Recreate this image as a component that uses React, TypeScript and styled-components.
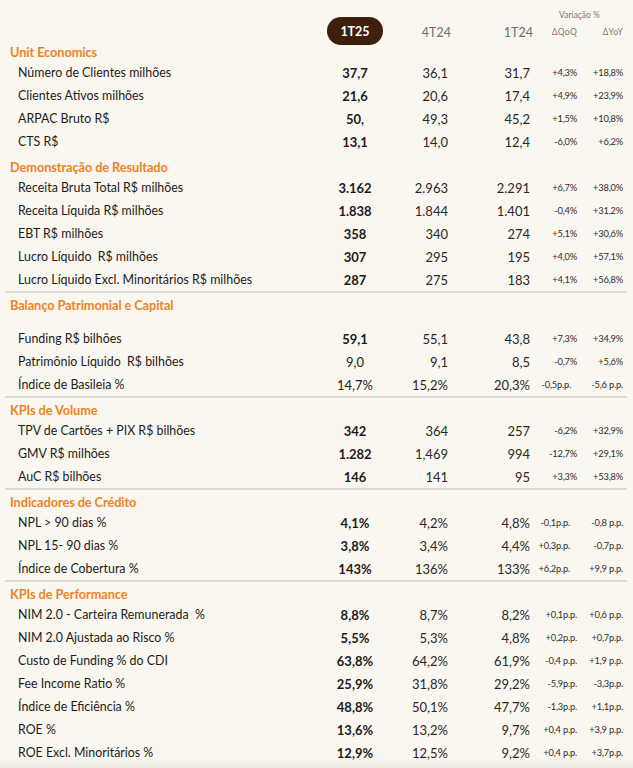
import React from "react";
import styled, { createGlobalStyle } from "styled-components";

const Global = createGlobalStyle`
  html, body { margin: 0; padding: 0; background: #faf7f0; }
  body { font-family: "Lato", "Open Sans", sans-serif; color: #1d1b19; }
`;

const COLS = "322px 56px 65px 82px 47px 46px";

const Page = styled.div`
  width: 633px;
  min-height: 768px;
  box-sizing: border-box;
  padding: 1px 6px 0 5px;
  background: linear-gradient(to bottom, #faf7f0 calc(100% - 10px), #ece9e3 100%);
`;

const Header = styled.div`
  display: grid;
  grid-template-columns: ${COLS};
  grid-template-rows: 14px 20px;
  padding-top: 7px;
  height: 41px;
  box-sizing: border-box;
`;

const Pill = styled.div`
  grid-column: 2;
  grid-row: 1 / span 2;
  align-self: end;
  height: 28px;
  margin-bottom: -3px;
  border-radius: 14px;
  background: #3c1f0d;
  color: #fff;
  font-weight: 700;
  font-size: 12.5px;
  display: flex;
  align-items: center;
  justify-content: center;
`;

const PeriodLabel = styled.div<{ $col: number }>`
  grid-column: ${(p) => p.$col};
  grid-row: 2;
  display: flex;
  align-items: center;
  justify-content: flex-end;
  margin-right: -3px;
  color: #6f6d6a;
  font-size: 12.5px;
`;

const VarTitle = styled.div`
  grid-column: 5 / span 2;
  grid-row: 1;
  display: flex;
  align-items: center;
  justify-content: center;
  padding-left: 6px;
  color: #7a7874;
  font-size: 8.5px;
`;

const DeltaLabel = styled.div<{ $col: number }>`
  grid-column: ${(p) => p.$col};
  grid-row: 2;
  display: flex;
  align-items: center;
  justify-content: flex-end;
  color: #7a7874;
  font-size: 8.5px;
  letter-spacing: 0.3px;
`;

const Section = styled.section<{ $line: boolean }>`
  border-top: 2px solid ${(p) => (p.$line ? "#dedbd4" : "transparent")};
  padding-top: 2px;
  &:first-of-type {
    border-top: none;
    padding-top: 0;
  }
`;

const Title = styled.h2<{ $gap: boolean }>`
  margin: 0 0 ${(p) => (p.$gap ? 13 : 0)}px 0;
  height: 19px;
  display: flex;
  align-items: center;
  padding-left: 5px;
  color: #ec8427;
  font-size: 12.8px;
  font-weight: 700;
  letter-spacing: -0.1px;
`;

const Row = styled.div`
  display: grid;
  grid-template-columns: ${COLS};
  height: 23px;
  align-items: center;
`;

const Label = styled.div`
  padding-left: 13px;
  font-size: 12.4px;
  white-space: pre;
  color: #1d1b19;
`;

const Current = styled.div<{ $bold: boolean }>`
  text-align: center;
  font-size: 13px;
  font-weight: ${(p) => (p.$bold ? 700 : 400)};
  color: #1d1b19;
`;

const Value = styled.div`
  text-align: right;
  font-size: 13px;
  color: #2a2826;
`;

const Delta = styled.div<{ $inset?: number }>`
  text-align: right;
  padding-right: ${(p) => p.$inset ?? 0}px;
  font-size: 9.3px;
  letter-spacing: -0.2px;
  color: #2e2c2a;
  white-space: nowrap;
`;

type R = {
  label: string;
  cur: string;
  bold?: boolean;
  prev: string;
  year: string;
  qoq: string;
  yoy: string;
  inset?: number;
};

type S = { title: string; line: boolean; gap?: boolean; rows: R[] };

const r = (
  label: string,
  cur: string,
  prev: string,
  year: string,
  qoq: string,
  yoy: string,
  opts: Partial<R> = {}
): R => ({ label, cur, prev, year, qoq, yoy, bold: true, ...opts });

const sections: S[] = [
  {
    title: "Unit Economics",
    line: false,
    rows: [
      r("Número de Clientes milhões", "37,7", "36,1", "31,7", "+4,3%", "+18,8%"),
      r("Clientes Ativos milhões", "21,6", "20,6", "17,4", "+4,9%", "+23,9%"),
      r("ARPAC Bruto R$", "50,", "49,3", "45,2", "+1,5%", "+10,8%"),
      r("CTS R$", "13,1", "14,0", "12,4", "-6,0%", "+6,2%"),
    ],
  },
  {
    title: "Demonstração de Resultado",
    line: false,
    rows: [
      r("Receita Bruta Total R$ milhões", "3.162", "2.963", "2.291", "+6,7%", "+38,0%"),
      r("Receita Líquida R$ milhões", "1.838", "1.844", "1.401", "-0,4%", "+31,2%"),
      r("EBT R$ milhões", "358", "340", "274", "+5,1%", "+30,6%"),
      r("Lucro Líquido  R$ milhões", "307", "295", "195", "+4,0%", "+57,1%"),
      r("Lucro Líquido Excl. Minoritários R$ milhões", "287", "275", "183", "+4,1%", "+56,8%"),
    ],
  },
  {
    title: "Balanço Patrimonial e Capital",
    line: true,
    gap: true,
    rows: [
      r("Funding R$ bilhões", "59,1", "55,1", "43,8", "+7,3%", "+34,9%"),
      r("Patrimônio Líquido  R$ bilhões", "9,0", "9,1", "8,5", "-0,7%", "+5,6%", { bold: false }),
      r("Índice de Basileia %", "14,7%", "15,2%", "20,3%", "-0,5p.p.", "-5,6 p.p.", { bold: false, inset: 6 }),
    ],
  },
  {
    title: "KPIs de Volume",
    line: true,
    rows: [
      r("TPV de Cartões + PIX R$ bilhões", "342", "364", "257", "-6,2%", "+32,9%"),
      r("GMV R$ milhões", "1.282", "1,469", "994", "-12,7%", "+29,1%"),
      r("AuC R$ bilhões", "146", "141", "95", "+3,3%", "+53,8%"),
    ],
  },
  {
    title: "Indicadores de Crédito",
    line: true,
    rows: [
      r("NPL > 90 dias %", "4,1%", "4,2%", "4,8%", "-0,1p.p.", "-0,8 p.p.", { inset: 7 }),
      r("NPL 15- 90 dias %", "3,8%", "3,4%", "4,4%", "+0,3p.p.", "-0,7p.p.", { inset: 7 }),
      r("Índice de Cobertura %", "143%", "136%", "133%", "+6,2p.p.", "+9,9 p.p.", { inset: 7 }),
    ],
  },
  {
    title: "KPIs de Performance",
    line: true,
    rows: [
      r("NIM 2.0 - Carteira Remunerada  %", "8,8%", "8,7%", "8,2%", "+0,1p.p.", "+0,6 p.p."),
      r("NIM 2.0 Ajustada ao Risco %", "5,5%", "5,3%", "4,8%", "+0,2p.p.", "+0,7p.p."),
      r("Custo de Funding % do CDI", "63,8%", "64,2%", "61,9%", "-0,4 p.p.", "+1,9 p.p."),
      r("Fee Income Ratio %", "25,9%", "31,8%", "29,2%", "-5,9p.p.", "-3,3p.p."),
      r("Índice de Eficiência %", "48,8%", "50,1%", "47,7%", "-1,3p.p.", "+1,1p.p."),
      r("ROE %", "13,6%", "13,2%", "9,7%", "+0,4 p.p.", "+3,9 p.p."),
      r("ROE Excl. Minoritários %", "12,9%", "12,5%", "9,2%", "+0,4 p.p.", "+3,7p.p."),
    ],
  },
];

export default function App() {
  return (
    <>
      <Global />
      <Page>
        <Header>
          <Pill>1T25</Pill>
          <PeriodLabel $col={3}>4T24</PeriodLabel>
          <PeriodLabel $col={4}>1T24</PeriodLabel>
          <VarTitle>Variação %</VarTitle>
          <DeltaLabel $col={5}>ΔQoQ</DeltaLabel>
          <DeltaLabel $col={6}>ΔYoY</DeltaLabel>
        </Header>
        {sections.map((s) => (
          <Section key={s.title} $line={s.line}>
            <Title $gap={!!s.gap}>{s.title}</Title>
            {s.rows.map((row) => (
              <Row key={row.label}>
                <Label>{row.label}</Label>
                <Current $bold={!!row.bold}>{row.cur}</Current>
                <Value>{row.prev}</Value>
                <Value>{row.year}</Value>
                <Delta $inset={row.inset}>{row.qoq}</Delta>
                <Delta>{row.yoy}</Delta>
              </Row>
            ))}
          </Section>
        ))}
      </Page>
    </>
  );
}
